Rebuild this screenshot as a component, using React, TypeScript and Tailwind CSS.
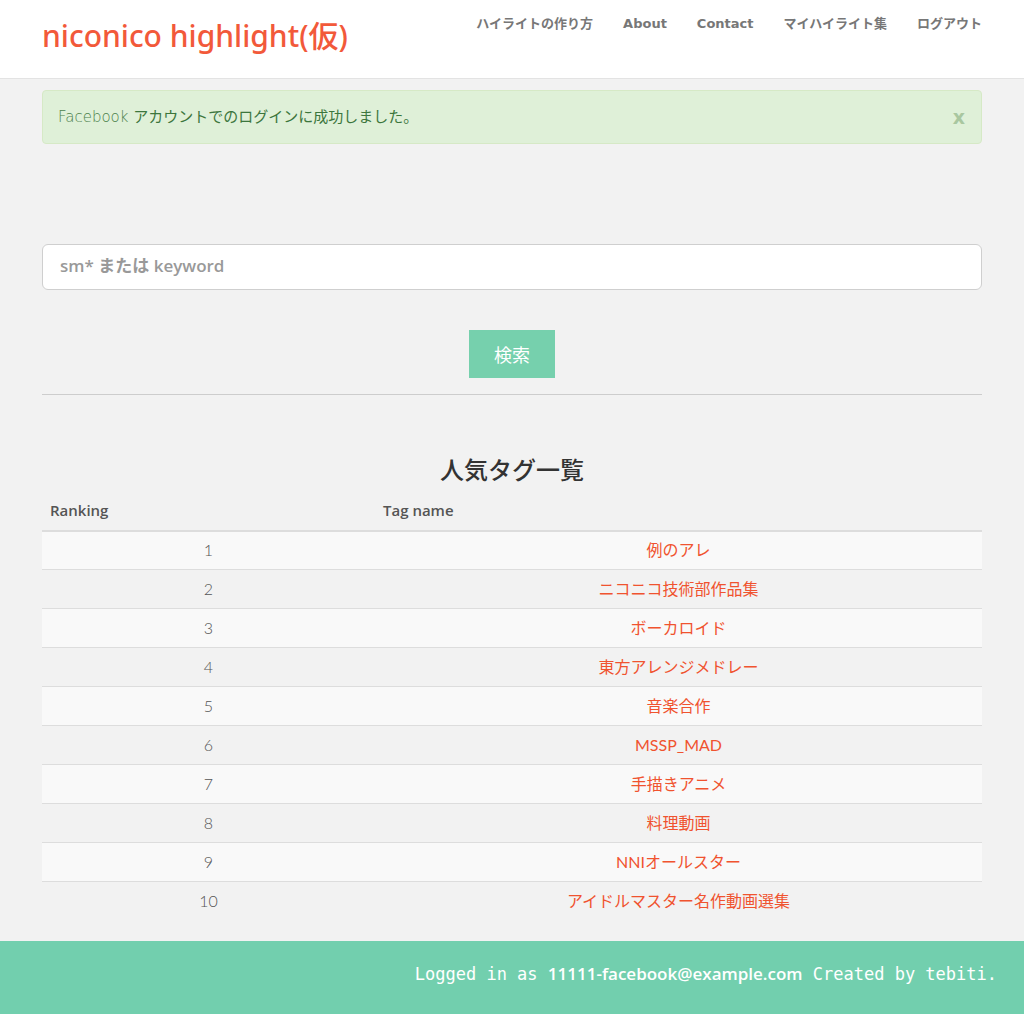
const navItems = ['ハイライトの作り方', 'About', 'Contact', 'マイハイライト集', 'ログアウト']

const tags = [
  '例のアレ',
  'ニコニコ技術部作品集',
  'ボーカロイド',
  '東方アレンジメドレー',
  '音楽合作',
  'MSSP_MAD',
  '手描きアニメ',
  '料理動画',
  'NNIオールスター',
  'アイドルマスター名作動画選集',
]

export default function App() {
  return (
    <div className="flex min-h-[1014px] flex-col bg-[#f2f2f2] font-['DejaVu_Sans',sans-serif]">
      <header className="h-[79px] border-b border-[#e3e3e3] bg-white">
        <div className="mx-[42px] flex items-start justify-between">
          <a className="pt-[16px] font-['Noto_Sans','Noto_Sans_CJK_JP',sans-serif] text-[30px] font-medium leading-[40px] text-[#f2593a]">
            niconico highlight(仮)
          </a>
          <nav className="flex gap-[30px] pt-[15px]">
            {navItems.map((item) => (
              <a
                key={item}
                className="font-['DejaVu_Sans','Noto_Sans_CJK_JP',sans-serif] text-[13px] font-bold leading-[18px] text-[#777]"
              >
                {item}
              </a>
            ))}
          </nav>
        </div>
      </header>

      <main className="mx-[42px] flex-1">
        <div className="mt-[11px] flex h-[54px] items-center justify-between rounded-[4px] border border-[#d6e9c6] bg-[#dff0d8] pl-[15px] pr-[16px]">
          <p className="font-['DejaVu_Sans','Noto_Sans_CJK_JP',sans-serif] text-[15px] text-[#3c763d]">
            <span className="font-light opacity-90">Facebook </span>
            アカウントでのログインに成功しました。
          </p>
          <button type="button" className="font-['DejaVu_Sans',sans-serif] text-[19px] font-bold leading-none text-[#a9c7a0]">
            x
          </button>
        </div>

        <input
          type="text"
          placeholder="sm* または keyword"
          className="mt-[100px] block h-[46px] w-full rounded-[6px] border border-[#cfcfcf] bg-white px-[17px] pb-[3px] font-['Open_Sans','Noto_Sans_CJK_JP',sans-serif] text-[17px] font-semibold text-[#555] placeholder:text-[#999]"
        />

        <div className="flex justify-center pt-[40px]">
          <button
            type="button"
            className="h-[48px] w-[86px] bg-[#76d0ad] font-['Noto_Sans_CJK_JP',sans-serif] text-[18px] text-white"
          >
            検索
          </button>
        </div>

        <hr className="mt-[16px] border-t border-[#cdcdcd]" />

        <h2 className="mt-[59px] text-center font-['Noto_Sans_CJK_JP',sans-serif] text-[24px] font-medium leading-[30px] text-[#333]">
          人気タグ一覧
        </h2>

        <table className="mt-[15px] w-full border-collapse">
          <thead>
            <tr className="border-b-2 border-[#dddddd]">
              <th className="w-[333px] px-[8px] pb-[8px] text-left font-['Open_Sans',sans-serif] text-[15px] font-semibold text-[#555]">
                Ranking
              </th>
              <th className="px-[8px] pb-[8px] text-left font-['Open_Sans',sans-serif] text-[15px] font-semibold text-[#555]">
                Tag name
              </th>
            </tr>
          </thead>
          <tbody>
            {tags.map((tag, i) => (
              <tr
                key={tag}
                className={`${i % 2 === 0 ? 'bg-[#f9f9f9]' : 'bg-[#f2f2f2]'} ${i < tags.length - 1 ? 'border-b border-[#dddddd]' : ''}`}
              >
                <td className="h-[39px] text-center font-['Lato',sans-serif] text-[16px] font-light text-[#555]">
                  {i + 1}
                </td>
                <td className="h-[39px] text-center">
                  <a className="font-['Lato','Noto_Sans_CJK_JP',sans-serif] text-[16px] text-[#f0532f]">
                    {tag}
                  </a>
                </td>
              </tr>
            ))}
          </tbody>
        </table>
      </main>

      <footer className="mt-[20px] flex h-[73px] items-center justify-end bg-[#72cfae] pb-[6px] pr-[27px] text-white">
        <p className="text-[17px]">
          <span className="font-['DejaVu_Sans_Mono',monospace] font-light">Logged in as </span>
          <span className="font-['Open_Sans',sans-serif] font-semibold">11111-facebook@example.com</span>
          <span className="font-['DejaVu_Sans_Mono',monospace] font-light"> Created by tebiti.</span>
        </p>
      </footer>
    </div>
  )
}
